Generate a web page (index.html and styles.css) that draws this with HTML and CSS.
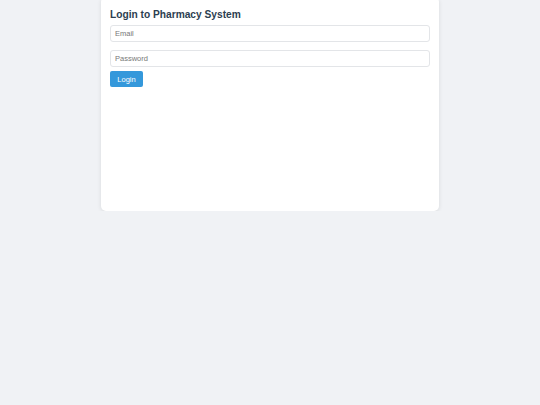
FILE: index.html
```html
<!DOCTYPE html>
<html>
<head>
<meta charset="utf-8">
<link rel="stylesheet" href="styles.css">
</head>
<body>
<div class="card">
  <h2 class="title">Login to Pharmacy System</h2>
  <form class="form">
    <input class="field" type="email" placeholder="Email">
    <input class="field" type="password" placeholder="Password">
    <button class="btn" type="button">Login</button>
  </form>
</div>
</body>
</html>
```
FILE: styles.css
```css
html, body {
  margin: 0;
  padding: 0;
  background: #f0f2f5;
  font-family: "Liberation Sans", Arial, sans-serif;
}
.card {
  box-sizing: border-box;
  width: 338px;
  height: 214px;
  margin: -3px auto 0;
  background: #fff;
  border-radius: 5px;
  box-shadow: 0 1px 4px rgba(0, 0, 0, 0.1);
  padding: 9px 9px;
}
.title {
  margin: 0 0 4px;
  padding-top: 3px;
  font-size: 10.2px;
  line-height: 12px;
  font-weight: bold;
  color: #2c3e50;
}
.form {
  display: flex;
  flex-direction: column;
  align-items: flex-start;
}
.field {
  box-sizing: border-box;
  width: 320px;
  height: 17px;
  margin-bottom: 8px;
  padding: 0 4px;
  border: 1px solid #e3e5e8;
  border-radius: 3px;
  font-family: "Liberation Sans", Arial, sans-serif;
  font-size: 7.5px;
  color: #333;
  outline: none;
}
.field + .field {
  margin-bottom: 4px;
}
.field::placeholder {
  color: #777;
}
.btn {
  box-sizing: border-box;
  width: 33px;
  height: 16px;
  padding: 0;
  border: none;
  border-radius: 2px;
  background: #3498db;
  color: #fff;
  font-family: "Liberation Sans", Arial, sans-serif;
  font-size: 7.5px;
}
```
